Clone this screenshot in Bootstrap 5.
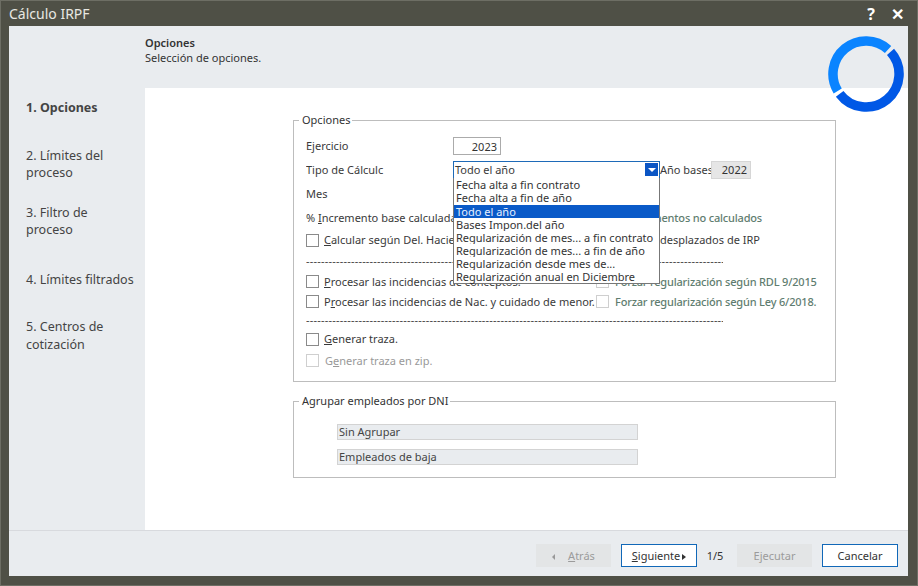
<!DOCTYPE html>
<html lang="es">
<head>
<meta charset="UTF-8">
<title>Cálculo IRPF</title>
<link rel="stylesheet" href="https://cdn.jsdelivr.net/npm/bootstrap@5.3.0/dist/css/bootstrap.min.css">
<style>
    body { font-family: "Noto Sans", "Liberation Sans", sans-serif; font-size: 11px; color: #3a3a3a; background: #4f5046; line-height: 14px; }
    .ventana { width: 918px; height: 586px; padding: 0 10px 10px 9px; box-shadow: inset 0 0 0 1px #6d6e64; }
    .titulo { height: 26px; color: #e8e8e2; font-size: 14px; padding-top: 2px; }
    .titulo-btn { color: #fff; font-size: 16px; font-weight: 700; line-height: 1; }
    .cuerpo { height: 504px; background: #e9ecef; }
    .lateral { width: 136px; padding: 73px 0 0 17px; font-size: 12.5px; line-height: 17.5px; color: #444; flex: none; }
    .paso-a { margin-top: 30px; } .paso-b { margin-top: 22px; } .paso-c { margin-top: 32px; }
    .cabecera { height: 62px; padding-top: 9px; color: #333; line-height: 15px; }
    .principal { height: 442px; padding: 25px 0 0 148px; }
    fieldset.grupo { width: 543px; border: 1px solid #bdbdbd; padding: 0 0 0 12px; }
    fieldset.grupo legend { float: none; width: auto; font-size: 11px; line-height: 14px; margin: 0 0 0 -7px; padding: 0 2px 0 3px; color: #333; }
    .grupo-a { height: 269px; }
    .grupo-b { height: 84px; margin-top: 12px; }
    .filas { display: grid; grid-template-rows: 22.5px 24px 24.5px 23.5px 21.5px 20.5px 20.5px 19px 18px 20.5px 22.5px; padding-top: 8px; white-space: nowrap; }
    .etq { width: 147px; flex: none; overflow: hidden; }
    .campo { height: 18px; border: 1px solid #ababab; border-radius: 0; padding: 0 3px; font-size: 11px; text-align: right; color: #333; background: #fff; }
    .campo-a { width: 48px; }
    .campo-b { width: 40px; background: #e6e6e6; border-color: #d6d6d6; }
    .combo { width: 207px; height: 18px; border: 1px solid #1e6ab8; padding: 0 1px 0 1px; background: #fff; flex: none; }
    .anno-txt { width: 51px; flex: none; }
    .flecha { width: 13px; height: 13px; background: #0a55c4; }
    .flecha-t { width: 0; height: 0; border-left: 4px solid transparent; border-right: 4px solid transparent; border-top: 4px solid #fff; }
    .casilla[type=checkbox] { width: 13px; height: 13px; margin: 0 5px 0 0; border: 1px solid #8a8a8a; border-radius: 0; flex: none; background-color: #fff; }
    .casilla-off[type=checkbox] { border-color: #cfcfcf; margin-right: 6px; }
    .izq-corta { width: 336px; flex: none; overflow: hidden; }
    .izq-forzar { width: 290px; flex: none; }
    .verde { color: #5f7d70; font-weight: 500; letter-spacing: -.18px; }
    .dcha-verde { margin-left: auto; margin-right: 73px; }
    .tenue { color: #999; }
    .guiones { width: 417px; overflow: hidden; letter-spacing: .2px; color: #444; line-height: 8px; }
    .lista { position: absolute; left: 160px; top: 65px; width: 207px; border: 1px solid #777; border-top: 0; border-radius: 0; background: #fff; z-index: 5; }
    .lista .list-group-item { border: 0; border-radius: 0; padding: 0 0 0 2px; height: 13.05px; line-height: 13px; font-size: 11px; color: #333; white-space: nowrap; }
    .lista .list-group-item.active { background: #0a5ac8; color: #e6f0ff; margin-top: .5px; }
    .solo { width: 301px; height: 16px; background: #e9ecef; border: 1px solid #d3d3d3; padding: 0 1px; line-height: 14px; margin: 0 0 9px 31px; color: #444; }
    .solo-primero { margin-top: 16px; }
    .pie { height: 46px; background: #e9ecef; border-top: 1px solid #d8dade; padding: 13px 10px 0 0; }
    .boton { width: 76px; height: 23px; padding: 0; font-size: 11px; line-height: 21px; border-radius: 0; background: #fff; border: 1px solid #1168b8; color: #333; }
    .boton:disabled { width: 75px; background: #e3e5e6; border-color: #e3e5e6; color: #9b9b9b; opacity: 1; }
    .boton-sep { margin-left: 10px; }
    .aro { position: absolute; right: 3px; top: 9px; z-index: 6; }
    .tri-d { display: inline-block; border-left: 4px solid #333; border-top: 3.5px solid transparent; border-bottom: 3.5px solid transparent; margin-left: 2px; }
    .tri-i { display: inline-block; border-right: 3px solid #999; border-top: 3px solid transparent; border-bottom: 3px solid transparent; margin-right: 13px; }
    .contador { width: 40px; padding-right: 4px; text-align: center; color: #333; line-height: 23px; }
</style>
</head>
<body class="overflow-hidden m-0">
<div class="ventana position-relative d-flex flex-column">
    <div class="titulo d-flex align-items-center justify-content-between">
        <span>Cálculo IRPF</span>
        <span class="d-flex gap-3 align-items-center me-1">
            <span class="titulo-btn">?</span>
            <span class="titulo-btn">✕</span>
        </span>
    </div>

    <div class="cuerpo d-flex position-relative">
        <div class="lateral">
            <div class="fw-bold">1. Opciones</div>
            <div class="paso-a">2. Límites del<br>proceso</div>
            <div class="paso-b">3. Filtro de<br>proceso</div>
            <div class="paso-c">4. Límites filtrados</div>
            <div class="paso-a">5. Centros de<br>cotización</div>
        </div>
        <div class="flex-grow-1">
            <div class="cabecera">
                <div class="fw-semibold">Opciones</div>
                <div>Selección de opciones.</div>
            </div>
            <div class="principal bg-white">
                <div class="position-relative">
                    <fieldset class="grupo grupo-a">
                        <legend>Opciones</legend>
                        <div class="filas">
                            <div class="d-flex align-items-center">
                                <span class="etq">Ejercicio</span>
                                <input class="campo campo-a" value="2023">
                            </div>
                            <div class="d-flex align-items-center">
                                <span class="etq">Tipo de Cálculc</span>
                                <div class="combo d-flex align-items-center justify-content-between">
                                    <span>Todo el año</span>
                                    <span class="flecha d-flex align-items-center justify-content-center"><span class="flecha-t"></span></span>
                                </div>
                                <span class="anno-txt">Año bases</span>
                                <input class="campo campo-b" value="2022">
                            </div>
                            <div class="d-flex align-items-center"><span class="etq">Mes</span></div>
                            <div class="d-flex align-items-center">
                                <span class="etq">% <u>I</u>ncremento base calculada</span>
                                <span class="verde dcha-verde">Incluir complementos no calculados</span>
                            </div>
                            <div class="d-flex align-items-center">
                                <input class="form-check-input casilla" type="checkbox">
                                <span class="izq-corta"><u>C</u>alcular según Del. Hacienda de trabajadores</span>
                                <span>desplazados de IRP</span>
                            </div>
                            <div class="d-flex align-items-center"><span class="guiones">--------------------------------------------------------------------------------------------------------------------------------------------</span></div>
                            <div class="d-flex align-items-center">
                                <span class="d-flex align-items-center izq-forzar">
                                    <input class="form-check-input casilla" type="checkbox">
                                    <span><u>P</u>rocesar las incidencias de conceptos.</span>
                                </span>
                                <input class="form-check-input casilla casilla-off" type="checkbox">
                                <span class="verde">Forzar regularización según RDL 9/2015</span>
                            </div>
                            <div class="d-flex align-items-center">
                                <span class="d-flex align-items-center izq-forzar">
                                    <input class="form-check-input casilla" type="checkbox">
                                    <span>P<u>r</u>ocesar las incidencias de Nac. y cuidado de menor.</span>
                                </span>
                                <input class="form-check-input casilla casilla-off" type="checkbox">
                                <span class="verde">Forzar regularización según Ley 6/2018.</span>
                            </div>
                            <div class="d-flex align-items-center"><span class="guiones">--------------------------------------------------------------------------------------------------------------------------------------------</span></div>
                            <div class="d-flex align-items-center">
                                <input class="form-check-input casilla" type="checkbox">
                                <span><u>G</u>enerar traza.</span>
                            </div>
                            <div class="d-flex align-items-center tenue">
                                <input class="form-check-input casilla casilla-off" type="checkbox">
                                <span>G<u>e</u>nerar traza en zip.</span>
                            </div>
                        </div>
                    </fieldset>

                    <div class="list-group lista">
                        <div class="list-group-item">Fecha alta a fin contrato</div>
                        <div class="list-group-item">Fecha alta a fin de año</div>
                        <div class="list-group-item active">Todo el año</div>
                        <div class="list-group-item">Bases Impon.del año</div>
                        <div class="list-group-item">Regularización de mes... a fin contrato</div>
                        <div class="list-group-item">Regularización de mes... a fin de año</div>
                        <div class="list-group-item">Regularización desde mes de...</div>
                        <div class="list-group-item">Regularización anual en Diciembre</div>
                    </div>

                    <fieldset class="grupo grupo-b">
                        <legend>Agrupar empleados por DNI</legend>
                        <div class="solo solo-primero">Sin Agrupar</div>
                        <div class="solo">Empleados de baja</div>
                    </fieldset>
                </div>
            </div>
        </div>
        <svg class="aro" width="78" height="78" viewBox="-39 -39 78 78" fill="none" stroke-width="9.5">
            <path d="M-28.29 17A33 33 0 0 1 22.08-24.52" stroke="#0a84ff"/>
            <path d="M24.52-22.08A33 33 0 1 1-26.35 19.86" stroke="#0058e6"/>
        </svg>
    </div>

    <div class="pie d-flex justify-content-end align-items-start">
        <button class="btn boton" disabled><span class="tri-i"></span><u>A</u>trás</button>
        <button class="btn boton boton-sep"><u>S</u>iguiente<span class="tri-d"></span></button>
        <span class="contador">1/5</span>
        <button class="btn boton" disabled>Ejecutar</button>
        <button class="btn boton boton-sep">Cancelar</button>
    </div>
</div>
</body>
</html>
